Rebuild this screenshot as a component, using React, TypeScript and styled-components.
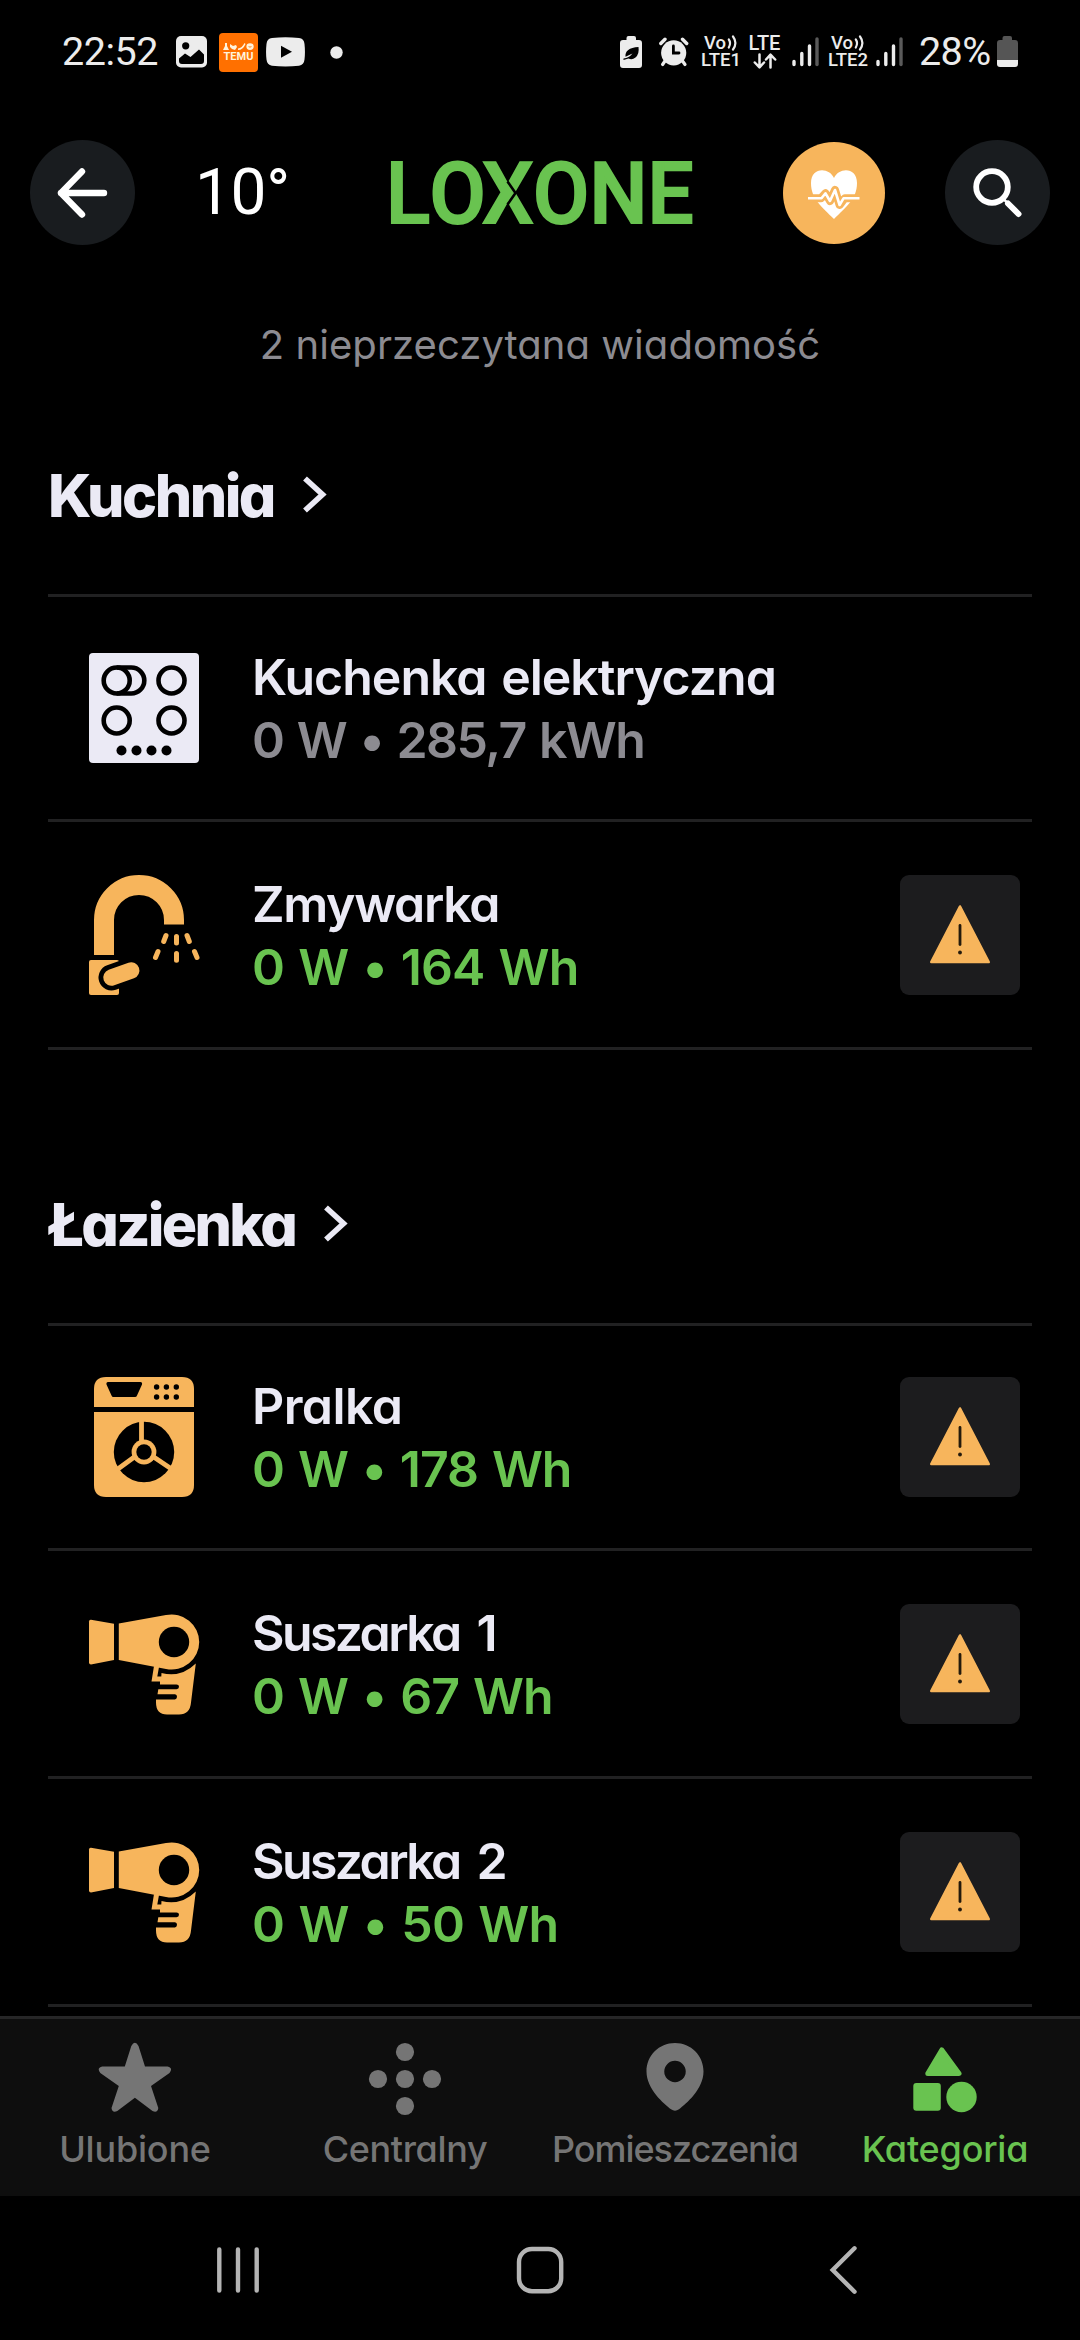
import React from "react";
import styled, { createGlobalStyle } from "styled-components";

const color = {
  text: "#ebeaf5",
  muted: "#8c8b91",
  green: "#69c350",
  orange: "#f7b55c",
  rule: "#212122",
  surface: "#1c1c1e",
  tab: "#757575",
  status: "#ececec",
  nav: "#b4b4b4",
};

const GlobalStyle = createGlobalStyle`
  *, *::before, *::after { box-sizing: border-box; }
  html, body { margin: 0; background: #000; }
  svg { display: block; flex: none; }
`;

const Screen = styled.div`
  width: 1080px;
  height: 2340px;
  display: flex;
  flex-direction: column;
  overflow: hidden;
  background: #000;
  color: ${color.text};
  font-family: Inter, "Open Sans", sans-serif;
  font-feature-settings: "cv11" 1;
`;

/* ---------- status bar ---------- */

const StatusBar = styled.div`
  height: 104px;
  flex: none;
  padding: 0 62px;
  display: flex;
  align-items: center;
  justify-content: space-between;
  color: ${color.status};
  font-family: Roboto, sans-serif;
`;

const StatusGroup = styled.div`
  display: flex;
  align-items: center;
`;

const StatusText = styled.span<{ $width: number; $track: number; $ml?: number }>`
  width: ${(p) => p.$width}px;
  margin-left: ${(p) => p.$ml ?? 0}px;
  font-size: 39.5px;
  line-height: 48px;
  letter-spacing: ${(p) => p.$track}px;
  white-space: nowrap;
`;

const Slot = styled.span<{ $ml: number }>`
  margin-left: ${(p) => p.$ml}px;
  display: flex;
`;

const TemuBadge = styled.span`
  width: 39px;
  height: 39px;
  margin-left: 12px;
  padding-top: 10px;
  border-radius: 4px;
  background: #ff7000;
  color: #fff3dc;
  display: flex;
  flex-direction: column;
  align-items: center;
  font: 700 11px/11px Roboto, sans-serif;
`;

const Network = styled.span<{ $ml: number; $width: number }>`
  width: ${(p) => p.$width}px;
  margin-left: ${(p) => p.$ml}px;
  display: flex;
  flex-direction: column;
  align-items: center;
  font: 500 18.5px/17.5px Roboto, sans-serif;
  white-space: nowrap;
`;

const NetworkTop = styled.span<{ $size: number }>`
  height: 17.5px;
  display: flex;
  align-items: center;
  gap: 1px;
  font-size: ${(p) => p.$size}px;
`;

/* ---------- header ---------- */

const Header = styled.header`
  height: 177px;
  flex: none;
  padding: 0 30px;
  display: flex;
  align-items: center;
`;

const RoundButton = styled.button<{ $size: number; $bg: string; $ml?: number }>`
  width: ${(p) => p.$size}px;
  height: ${(p) => p.$size}px;
  margin: 0 0 0 ${(p) => p.$ml ?? 0}px;
  padding: 0;
  border: 0;
  border-radius: 50%;
  background: ${(p) => p.$bg};
  display: grid;
  place-items: center;
`;

const Temperature = styled.span`
  width: 100px;
  margin-left: 60px;
  color: #fff;
  font: 400 64px/76px Roboto, sans-serif;
  letter-spacing: -0.4px;
`;

const LogoSlot = styled.div`
  margin-left: 87px;
`;

/* ---------- content ---------- */

const Content = styled.main`
  flex: 1;
  min-height: 0;
  overflow: hidden;
  display: flex;
  flex-direction: column;
`;

const Message = styled.p`
  height: 127px;
  flex: none;
  margin: 0;
  display: flex;
  align-items: center;
  justify-content: center;
  color: ${color.muted};
  font-size: 40px;
  font-weight: 400;
  line-height: 48px;
  letter-spacing: 0.05px;
`;

const Section = styled.section`
  flex: none;
  padding: 0 48px;
  & + & {
    margin-top: 87px;
  }
`;

const SectionTitle = styled.h2<{ $track: number }>`
  height: 186px;
  margin: 0;
  padding: 0 0 11px;
  display: flex;
  align-items: center;
  gap: 28px;
  font-size: 59px;
  font-weight: 800;
  line-height: 72px;
  letter-spacing: ${(p) => p.$track}px;
`;

const Row = styled.div`
  height: 228px;
  padding: 0 12px 0 36px;
  border-top: 3px solid ${color.rule};
  display: flex;
  align-items: center;
  &:first-of-type {
    height: 225px;
  }
  &:last-of-type {
    height: 231px;
    border-bottom: 3px solid ${color.rule};
  }
`;

const RowText = styled.div`
  flex: 1;
  margin-left: 48px;
  padding-top: 2px;
  font-size: 50px;
  font-weight: 600;
  line-height: 63px;
  white-space: nowrap;
`;

const RowLine = styled.div<{ $color: string; $track: number; $word: number }>`
  color: ${(p) => p.$color};
  letter-spacing: ${(p) => p.$track}px;
  word-spacing: ${(p) => p.$word}px;
`;

const WarnButton = styled.button`
  width: 120px;
  height: 120px;
  padding: 0;
  border: 0;
  border-radius: 9px;
  background: ${color.surface};
  display: grid;
  place-items: center;
`;

/* ---------- bottom bars ---------- */

const TabBar = styled.nav`
  height: 180px;
  flex: none;
  border-top: 3px solid #262627;
  background: #0e0e0e;
  display: grid;
  grid-template-columns: repeat(4, 1fr);
`;

const Tab = styled.div<{ $active?: boolean; $track: number }>`
  padding-top: 21px;
  display: flex;
  flex-direction: column;
  align-items: center;
  gap: 11px;
  color: ${(p) => (p.$active ? color.green : color.tab)};
  font-size: 36px;
  font-weight: 500;
  line-height: 44px;
  letter-spacing: ${(p) => p.$track}px;
`;

const SystemNav = styled.div`
  height: 144px;
  flex: none;
  padding: 4px 208px 0;
  display: flex;
  align-items: center;
  justify-content: space-between;
`;

/* ---------- status icons ---------- */

const PictureIcon = () => (
  <svg width="31" height="32" viewBox="0 0 31 32">
    <rect width="31" height="31.5" rx="5" fill={color.status} />
    <circle cx="9.7" cy="9.8" r="3.6" fill="#000" />
    <path d="M3 22.5 L9 17.5 L14.5 21 L23 13.5 L28 18.5 V25 Q28 28 25 28 H6 Q3 28 3 25Z" fill="#000" />
  </svg>
);

const TemuMarks = () => (
  <svg width="31" height="8" viewBox="0 0 31 8" fill="#fff3dc">
    <path d="M2 0 H4 V3 L6 7 H0 L2 3Z" />
    <path d="M7 1 L10 3 L13 2 L14 4 L12 7 L9 6 L7 4Z" />
    <path d="M21.5 0 L22.5 1 Q20 7 15 7 L15 5.5 Q19 5 21.5 0Z" />
    <path d="M27 0.3 Q30.7 0.3 30.7 3.6 Q30.7 7 27 7 Q23.4 7 23.4 3.6 Q23.4 0.3 27 0.3 M25 3.4 Q27 5.4 29 3.4 Z" fillRule="evenodd" />
  </svg>
);

const VideoIcon = () => (
  <svg width="39" height="30" viewBox="0 0 39 30">
    <path d="M6 1 Q19.5 -0.5 33 1 Q38 1.5 38.5 7 Q39.4 15 38.5 22.5 Q38 28 33 28.7 Q19.5 30.2 6 28.7 Q1 28 0.5 22.5 Q-0.4 15 0.5 7 Q1 1.5 6 1Z" fill={color.status} />
    <path d="M15 8.8 V20.8 L26 14.8Z" fill="#000" />
  </svg>
);

const DotIcon = () => (
  <svg width="13" height="13" viewBox="0 0 13 13">
    <circle cx="6.5" cy="6.5" r="6.2" fill={color.status} />
  </svg>
);

const LeafBatteryIcon = () => (
  <svg width="23" height="32" viewBox="0 0 23 32">
    <path d="M6.5 4 V2 Q6.5 0 8.5 0 H14 Q16 0 16 2 V4 H19 Q22 4 22 7 V29 Q22 32 19 32 H3 Q0 32 0 29 V7 Q0 4 3 4Z" fill={color.status} />
    <path d="M18.5 11 Q19.5 18 15.5 21.5 Q12 24.5 8.5 22.5 L3.5 24 L3.5 22.5 Q9 22 12.5 17.5 Q8.5 19.5 5.5 20.8 Q4.5 12 18.5 11Z" fill="#000" />
  </svg>
);

const AlarmIcon = () => (
  <svg width="30" height="30" viewBox="0 0 30 30" fill="none">
    <circle cx="14.7" cy="15.8" r="12.6" fill={color.status} />
    <path d="M1.8 6.5 L6 2.2 M27.7 6.5 L23.5 2.2" stroke={color.status} strokeWidth="3.4" strokeLinecap="round" />
    <path d="M6 24 L3.6 27.5 M23.5 24 L26 27.5" stroke={color.status} strokeWidth="3.2" strokeLinecap="round" />
    <path d="M14.4 9 V16 H20" stroke="#000" strokeWidth="2.8" strokeLinecap="round" />
  </svg>
);

const WavesIcon = () => (
  <svg width="11" height="16" viewBox="0 0 11 16" fill="none" stroke={color.status} strokeWidth="2.2" strokeLinecap="round">
    <path d="M1.8 4.5 Q4.3 8 1.8 12.5" />
    <path d="M6 1.5 Q10.8 8 6 14.5" />
  </svg>
);

const UpDownIcon = () => (
  <svg width="24" height="16" viewBox="0 0 24 16" fill="none" stroke={color.status} strokeWidth="2.5" strokeLinecap="round" strokeLinejoin="round">
    <path d="M6.5 1.5 V14 M1.8 9.5 L6.5 14.3 L11 9.5" />
    <path d="M17.5 14.5 V2 M13 6.5 L17.5 1.7 L22.2 6.5" />
  </svg>
);

const SignalIcon = () => (
  <svg width="27" height="30" viewBox="0 0 27 30" strokeWidth="3.4" strokeLinecap="round" stroke={color.status}>
    <path d="M2 24.5 V27.5 M9.8 16.5 V27.5 M17.5 9 V27.5" />
    <path d="M25 2 V27.5" stroke="#5a5a5a" />
  </svg>
);

const BatteryIcon = () => (
  <svg width="21" height="32" viewBox="0 0 21 32">
    <path d="M5.5 4 V2 Q5.5 0 7.5 0 H13 Q15 0 15 2 V4 H18 Q21 4 21 7 V24 H0 V7 Q0 4 3 4Z" fill="#555" />
    <path d="M0 24 H21 V28 Q21 31 18 31 H3 Q0 31 0 28Z" fill={color.status} />
  </svg>
);

/* ---------- header icons ---------- */

const BackIcon = () => (
  <svg width="52" height="52" viewBox="57 166.5 52 52" fill="none" stroke="#fff" strokeWidth="6.4" strokeLinecap="round" strokeLinejoin="round">
    <path d="M82 171 L61 192.5 L82 214 M61 192.5 H104" />
  </svg>
);

const Logo = () => (
  <svg width="316" height="110" viewBox="382 137 316 110" overflow="visible">
    <text
      transform="scale(0.95 1)"
      x="406.3 452.1 507.4 561 620.5 681.6"
      y="222"
      fill={color.green}
      stroke={color.green}
      strokeWidth="2"
      fontFamily="Roboto, sans-serif"
      fontWeight="500"
      fontSize="86"
    >
      LOXONE
    </text>
    <path d="M507.5 180.5 L515.500 192 L507.500 203.500" fill="none" stroke="#000" strokeWidth="2.6" />
  </svg>
);

const HeartIcon = () => (
  <svg width="56" height="56" viewBox="806 164 56 56" fill="none">
    <path d="M834 177 C829 166 811 166 811 182 C811 198 822 206 834 218 C846 206 857 198 857 182 C857 166 839 166 834 177Z" fill="#fff" />
    <path d="M804 197.3 H821 L825.5 192.3 L830 200 L835 189 L839.6 204 L844.7 197.3 H864" stroke={color.orange} strokeWidth="8" strokeLinejoin="round" />
    <path d="M808 197.3 H821.5 L825.5 192.3 L830 200 L835 189 L839.6 204 L843.5 197.3 H859.5" stroke="#fff" strokeWidth="2.6" strokeLinejoin="round" />
  </svg>
);

const SearchIcon = () => (
  <svg width="52" height="52" viewBox="971.5 166.5 52 52" fill="none" stroke="#fff">
    <circle cx="991.5" cy="186.5" r="15.8" strokeWidth="5.8" />
    <path d="M1007.5 203 L1018 213.5" strokeWidth="6" strokeLinecap="round" />
    <path d="M1002.5 198 L1008 203.5" strokeWidth="2.5" />
  </svg>
);

/* ---------- content icons ---------- */

const Chevron = () => (
  <svg width="26" height="38" viewBox="0 1.5 26 38" overflow="visible" fill="none" stroke={color.text} strokeWidth="5.6">
    <path d="M3 3 L20.5 19 L3 35" />
  </svg>
);

const StoveIcon = () => (
  <svg width="120" height="120" viewBox="84 648 120 120">
    <rect x="89" y="653" width="110" height="110" rx="4" fill={color.text} />
    <g fill="none" stroke="#000" strokeWidth="4.6">
      <circle cx="116.7" cy="680.5" r="13" />
      <path d="M116.7 667.5 H131.3 A13 13 0 0 1 131.3 693.5 H116.7" />
      <circle cx="171.5" cy="680.5" r="13" />
      <circle cx="116.7" cy="720.5" r="13" />
      <circle cx="171.5" cy="720.5" r="13" />
    </g>
    {[121.5, 136.5, 151.5, 166.5].map((x) => (
      <circle key={x} cx={x} cy="750.5" r="5" fill="#000" />
    ))}
  </svg>
);

const FaucetIcon = () => (
  <svg width="120" height="120" viewBox="84 875 120 120" fill="none" stroke={color.orange}>
    <path d="M104 955 V920 A35 35 0 0 1 174 920 V924.5" strokeWidth="20" />
    <rect x="89" y="960" width="30" height="35" rx="2" fill={color.orange} stroke="none" />
    <path d="M111.5 977.5 L131.2 970.5" stroke="#000" strokeWidth="26" strokeLinecap="round" />
    <path d="M111.5 977.5 L131.2 970.5" strokeWidth="16.5" strokeLinecap="round" />
    <g strokeWidth="5" strokeLinecap="round">
      <path d="M166 935.5 L163.7 941.5 M176.5 936.5 V943 M187 935.5 L189.3 941.5" />
      <path d="M158 951.5 L155.5 957.5 M176.5 953.5 V960.3 M194.5 951.5 L197 957.5" />
    </g>
  </svg>
);

const WasherIcon = () => (
  <svg width="120" height="120" viewBox="84 1377 120 120" fill={color.orange}>
    <path d="M94 1407 V1389 Q94 1377 106 1377 H182 Q194 1377 194 1389 V1407Z" />
    <path d="M94 1412 H194 V1485 Q194 1497 182 1497 H106 Q94 1497 94 1485Z" />
    <path d="M108 1382 H140.5 Q142.5 1382 142 1384.5 L137 1395.5 Q136.5 1397 135 1397 H113.5 Q112 1397 111.5 1395.5 L106.5 1384.5 Q106 1382 108 1382Z" fill="#000" />
    {[1387, 1397].map((y) =>
      [156.6, 166.4, 176.3].map((x) => <circle key={`${x}-${y}`} cx={x} cy={y} r="2.7" fill="#000" />)
    )}
    <circle cx="144" cy="1452" r="30.2" fill="#000" />
    <path d="M141.5 1421 V1445 M135 1456.5 L116.5 1470 M153 1456.5 L173 1470" stroke={color.orange} strokeWidth="4.8" />
    <circle cx="144" cy="1452" r="12.4" />
    <circle cx="144" cy="1452" r="7.7" fill="#000" />
  </svg>
);

const DryerIcon = () => (
  <svg width="120" height="120" viewBox="84 1603.5 120 120" fill={color.orange}>
    <path d="M91 1619.2 L114 1623.2 V1659.5 L91 1664 Q89 1664 89 1662 V1621 Q89 1619 91 1619.2Z" />
    <path d="M118.8 1623 L166 1614.6 A27.5 27.5 0 1 1 166 1668.4 L118.8 1659.5Z" />
    <circle cx="174" cy="1641.5" r="15.2" fill="#000" />
    <path d="M161.5 1672.5 Q181 1677.5 195.8 1663 L191 1702 Q190 1714 179 1714 H167 Q156 1714 156 1702 V1699 H175 Q177 1698.5 177 1696.3 Q177 1694 175 1693.7 H157.5 L158.3 1688.7 H176.5 Q179 1688.5 179 1686.3 Q179 1684 176.5 1684 H160 V1681 H151.5 L154 1665.5 L159 1666.5 L157.3 1676 H161.3Z" />
  </svg>
);

const WarnIcon = () => (
  <svg width="62" height="62" viewBox="929 904 62 62">
    <path d="M960 906.5 L988.7 962 H931.3Z" fill={color.orange} stroke={color.orange} strokeWidth="2.6" strokeLinejoin="round" />
    <path d="M960 925.5 V944.5" stroke="#241a0c" strokeWidth="2.8" strokeLinecap="round" />
    <circle cx="960" cy="952.5" r="1.9" fill="#241a0c" />
  </svg>
);

/* ---------- tab icons ---------- */

const StarIcon = () => (
  <svg width="76" height="76" viewBox="97 2040 76 76" fill="currentColor">
    <path d="M131.3 2046 Q134.9 2039.5 138.5 2046 L145 2066.5 L167.5 2066.5 Q173.5 2068 169.5 2073 L151 2086 L158.3 2108 Q157.5 2113.5 152.5 2111 L134.9 2097.8 L117.3 2111 Q112.3 2113.5 111.5 2108 L118.8 2086 L100.3 2073 Q96.3 2068 102.3 2066.5 L124.8 2066.5Z" />
  </svg>
);

const DotsIcon = () => (
  <svg width="76" height="76" viewBox="367 2040 76 76" fill="currentColor">
    <circle cx="405" cy="2052" r="9.1" />
    <circle cx="378" cy="2079" r="9.1" />
    <circle cx="405" cy="2079" r="9.1" />
    <circle cx="432" cy="2079" r="9.1" />
    <circle cx="405" cy="2106" r="9.1" />
  </svg>
);

const PinIcon = () => (
  <svg width="76" height="76" viewBox="637 2040 76 76" fill="currentColor">
    <path fillRule="evenodd" d="M675 2043 C691 2043 703.5 2055.5 703.5 2071.5 C703.5 2089 686 2104 679 2109.3 Q675 2112 671 2109.3 C664 2104 646.5 2089 646.5 2071.5 C646.5 2055.5 659 2043 675 2043Z M675 2060.8 A10.7 10.7 0 1 0 675 2082.2 A10.7 10.7 0 1 0 675 2060.8Z" />
  </svg>
);

const ShapesIcon = () => (
  <svg width="76" height="76" viewBox="907 2040 76 76" fill="currentColor">
    <path d="M941.8 2050 L959 2073.5 H927.8Z" stroke="currentColor" strokeWidth="5" strokeLinejoin="round" />
    <rect x="913.3" y="2083" width="27.5" height="27.7" rx="3" />
    <circle cx="961.5" cy="2097" r="15.2" />
  </svg>
);

/* ---------- system nav icons ---------- */

const RecentsIcon = () => (
  <svg width="60" height="60" viewBox="208 2240 60 60" stroke={color.nav} strokeWidth="4.4" strokeLinecap="round">
    <path d="M219.3 2249.5 V2290.5 M238 2249.5 V2290.5 M256.7 2249.5 V2290.5" />
  </svg>
);

const HomeIcon = () => (
  <svg width="60" height="60" viewBox="510 2240 60 60" fill="none" stroke={color.nav} strokeWidth="4.4">
    <rect x="519" y="2249" width="42.2" height="42.2" rx="13" />
  </svg>
);

const NavBackIcon = () => (
  <svg width="60" height="60" viewBox="812 2240 60 60" fill="none" stroke={color.nav} strokeWidth="4.4" strokeLinecap="round">
    <path d="M854.5 2248.3 L832.7 2270 L854.5 2291.7" />
  </svg>
);

/* ---------- data ---------- */

type Device = {
  icon: () => React.ReactElement;
  name: string;
  nameTrack: number;
  nameWord?: number;
  value: string;
  valueTrack: number;
  idle?: boolean;
};

type Room = { name: string; track: number; devices: Device[] };

const rooms: Room[] = [
  {
    name: "Kuchnia",
    track: -2.5,
    devices: [
      { icon: StoveIcon, name: "Kuchenka elektryczna", nameTrack: -1, nameWord: 3, value: "0 W • 285,7 kWh", valueTrack: -1.6, idle: true },
      { icon: FaucetIcon, name: "Zmywarka", nameTrack: -1.35, value: "0 W • 164 Wh", valueTrack: -0.9 },
    ],
  },
  {
    name: "Łazienka",
    track: -2.7,
    devices: [
      { icon: WasherIcon, name: "Pralka", nameTrack: -0.6, value: "0 W • 178 Wh", valueTrack: -1.05 },
      { icon: DryerIcon, name: "Suszarka 1", nameTrack: -2.6, nameWord: 7, value: "0 W • 67 Wh", valueTrack: -1 },
      { icon: DryerIcon, name: "Suszarka 2", nameTrack: -2.6, nameWord: 7, value: "0 W • 50 Wh", valueTrack: -0.8 },
    ],
  },
];

const tabs = [
  { label: "Ulubione", icon: StarIcon, track: -0.2 },
  { label: "Centralny", icon: DotsIcon, track: -0.35 },
  { label: "Pomieszczenia", icon: PinIcon, track: -1.05 },
  { label: "Kategoria", icon: ShapesIcon, track: -0.2, active: true },
];

const VoLte = ({ sim, ml }: { sim: number; ml: number }) => (
  <Network $ml={ml} $width={38}>
    <NetworkTop $size={18.5}>
      Vo
      <WavesIcon />
    </NetworkTop>
    <span>LTE{sim}</span>
  </Network>
);

export default function App() {
  return (
    <Screen>
      <GlobalStyle />
      <StatusBar>
        <StatusGroup>
          <StatusText $width={98} $track={-0.5}>22:52</StatusText>
          <Slot $ml={16}><PictureIcon /></Slot>
          <TemuBadge>
            <TemuMarks />
            <span>TEMU</span>
          </TemuBadge>
          <Slot $ml={8}><VideoIcon /></Slot>
          <Slot $ml={25}><DotIcon /></Slot>
        </StatusGroup>
        <StatusGroup>
          <LeafBatteryIcon />
          <Slot $ml={16}><AlarmIcon /></Slot>
          <VoLte sim={1} ml={13} />
          <Network $ml={8} $width={33}>
            <NetworkTop $size={20}>LTE</NetworkTop>
            <UpDownIcon />
          </Network>
          <Slot $ml={11}><SignalIcon /></Slot>
          <VoLte sim={2} ml={10} />
          <Slot $ml={9}><SignalIcon /></Slot>
          <StatusText $width={74} $ml={16} $track={-0.6}>28%</StatusText>
          <Slot $ml={4}><BatteryIcon /></Slot>
        </StatusGroup>
      </StatusBar>

      <Header>
        <RoundButton $size={105} $bg="#191c1f" aria-label="Wstecz"><BackIcon /></RoundButton>
        <Temperature>10°</Temperature>
        <LogoSlot><Logo /></LogoSlot>
        <RoundButton $size={102} $bg={color.orange} $ml={85}><HeartIcon /></RoundButton>
        <RoundButton $size={105} $bg="#191c1f" $ml={60}><SearchIcon /></RoundButton>
      </Header>

      <Content>
        <Message>2 nieprzeczytana wiadomość</Message>
        {rooms.map((room) => (
          <Section key={room.name}>
            <SectionTitle $track={room.track}>
              {room.name}
              <Chevron />
            </SectionTitle>
            {room.devices.map((d) => (
              <Row key={d.name}>
                <d.icon />
                <RowText>
                  <RowLine $color={color.text} $track={d.nameTrack} $word={d.nameWord ?? 0}>{d.name}</RowLine>
                  <RowLine $color={d.idle ? color.muted : color.green} $track={d.valueTrack} $word={2.4}>{d.value}</RowLine>
                </RowText>
                {!d.idle && <WarnButton><WarnIcon /></WarnButton>}
              </Row>
            ))}
          </Section>
        ))}
      </Content>

      <TabBar>
        {tabs.map((t) => (
          <Tab key={t.label} $active={t.active} $track={t.track}>
            <t.icon />
            {t.label}
          </Tab>
        ))}
      </TabBar>

      <SystemNav>
        <RecentsIcon />
        <HomeIcon />
        <NavBackIcon />
      </SystemNav>
    </Screen>
  );
}
